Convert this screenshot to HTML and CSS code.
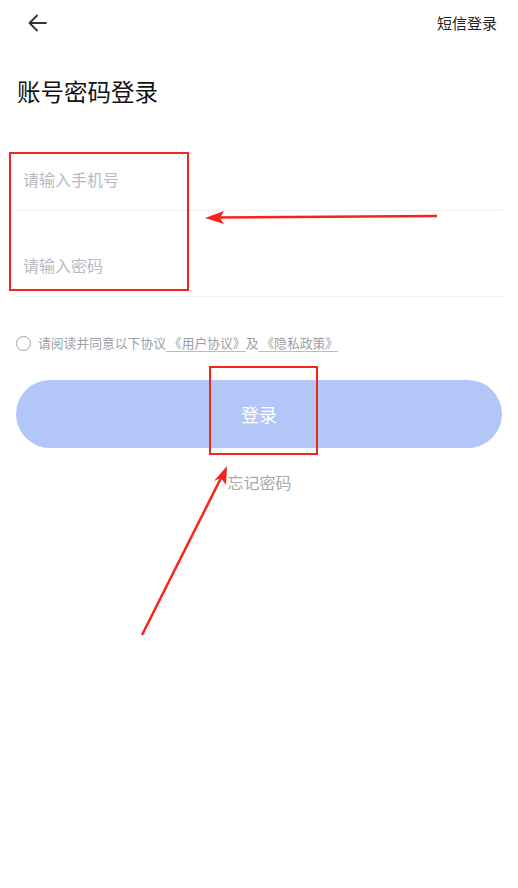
FILE: index.html
```html
<!DOCTYPE html>
<html lang="zh">
<head>
<meta charset="utf-8">
<link rel="stylesheet" href="styles.css">
</head>
<body>
<div class="page">
  <header class="topbar">
    <svg class="back" width="22" height="22" viewBox="0 0 22 22"><path d="M19 11H3M10 3.5L2.5 11 10 18.5" fill="none" stroke="#333" stroke-width="1.8" stroke-linecap="round" stroke-linejoin="round"/></svg>
    <span class="sms">短信登录</span>
  </header>
  <h1 class="title">账号密码登录</h1>
  <div class="form">
    <div class="field"><span class="ph">请输入手机号</span></div>
    <div class="field second"><span class="ph">请输入密码</span></div>
  </div>
  <div class="agree">
    <span class="radio"></span>
    <span class="agree-text">请阅读并同意以下协议<u class="link"> 《用户协议》</u>及<u class="link"> 《隐私政策》</u></span>
  </div>
  <button class="login">登录</button>
  <div class="forgot">忘记密码</div>

  <div class="mark box1"></div>
  <div class="mark box2"></div>
  <svg class="arrows" width="518" height="888" viewBox="0 0 518 888">
    <line x1="437" y1="216" x2="214" y2="217.5" stroke="#f5231b" stroke-width="2.5"/>
    <polygon points="205,218 224,211 220,218 224,224" fill="#f5231b"/>
    <line x1="142" y1="635" x2="223" y2="474" stroke="#f5231b" stroke-width="2.5"/>
    <polygon points="227,466 226,485 221,478 214,481" fill="#f5231b"/>
  </svg>
</div>
</body>
</html>
```
FILE: styles.css
```css
* { box-sizing: border-box; margin: 0; padding: 0; }
html, body { background: #fff; }
body { font-family: "Noto Sans CJK SC", "Noto Sans", sans-serif; width: 518px; height: 888px; overflow: hidden; }
.page { position: relative; width: 518px; height: 888px; }
.topbar { height: 45px; display: flex; align-items: center; justify-content: space-between; padding: 0 21px 0 27px; }
.back { display: block; }
.sms { font-size: 15px; color: #222; line-height: 20px; }
.title { margin: 30px 0 0 17px; font-size: 23.5px; font-weight: 400; color: #111; line-height: 32px; }
.form { margin: 20px 16px 0 16px; }
.field { height: 84px; display: flex; align-items: flex-end; padding: 0 0 20px 7px; border-bottom: 1px solid #eeeff1; }
.field.second { height: 86px; }
.ph { font-size: 16px; line-height: 22px; color: #b6b9c1; }
.agree { display: flex; align-items: center; margin: 36px 0 0 16px; height: 20px; }
.radio { width: 15px; height: 15px; border: 1.2px solid #9fa3aa; border-radius: 50%; margin-right: 7px; }
.agree-text { font-size: 12.8px; color: #9b9fa6; line-height: 18px; }
.link { text-decoration: underline; text-underline-offset: 3px; text-decoration-color: #b9bcc2; }
.login { display: block; margin: 27px 16px 0 16px; width: 486px; height: 68px; border: none; border-radius: 34px; background: #b3c6f8; color: #fff; font-family: inherit; font-size: 18px; }
.forgot { margin-top: 23px; text-align: center; font-size: 16px; line-height: 22px; color: #a5a9b0; padding-left: 1px; }
.mark { position: absolute; border: 2px solid #f5231b; }
.box1 { left: 9px; top: 152px; width: 180px; height: 139px; }
.box2 { left: 209px; top: 366px; width: 109px; height: 89px; }
.arrows { position: absolute; left: 0; top: 0; pointer-events: none; }
```
